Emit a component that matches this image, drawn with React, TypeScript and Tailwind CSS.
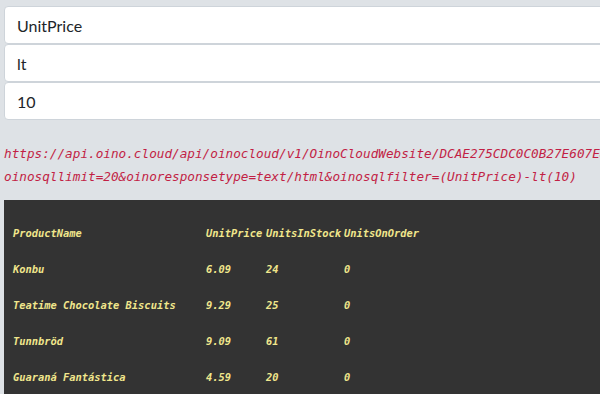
import React from 'react';

const fields = ['UnitPrice', 'lt', '10'];

const rows = [
  { name: 'Konbu', price: '6.09', stock: '24', order: '0' },
  { name: 'Teatime Chocolate Biscuits', price: '9.29', stock: '25', order: '0' },
  { name: 'Tunnbröd', price: '9.09', stock: '61', order: '0' },
  { name: 'Guaraná Fantástica', price: '4.59', stock: '20', order: '0' },
];

const mono = { fontFamily: '"DejaVu Sans Mono", "Liberation Mono", monospace' };

function Row({ cells }: { cells: string[] }) {
  return (
    <div className="flex h-[36px] items-center">
      <div className="w-[193px] shrink-0">{cells[0]}</div>
      <div className="w-[60px] shrink-0">{cells[1]}</div>
      <div className="w-[78px] shrink-0">{cells[2]}</div>
      <div className="shrink-0">{cells[3]}</div>
    </div>
  );
}

export default function App() {
  return (
    <div className="h-[394px] w-[600px] overflow-hidden bg-[#dee2e6]">
      <div className="w-[640px] pl-[4px] pt-[6px]">
        <div className="flex flex-col">
          {fields.map((f) => (
            <input
              key={f}
              readOnly
              value={f}
              className="h-[38px] w-full rounded-[4px] border border-[#ced4da] bg-white px-[12px] text-[16px] text-[#212529] outline-none"
              style={{ fontFamily: 'Lato, "Open Sans", sans-serif' }}
            />
          ))}
        </div>

        <div
          className="mt-[22px] text-[12.7px] italic leading-[23px] text-[#c21f45] whitespace-nowrap"
          style={mono}
        >
          <div>https://api.oino.cloud/api/oinocloud/v1/OinoCloudWebsite/DCAE275CDC0C0B27E607E8B1?</div>
          <div>oinosqllimit=20&amp;oinoresponsetype=text/html&amp;oinosqlfilter=(UnitPrice)-lt(10)</div>
        </div>

        <div
          className="mt-[12px] h-[220px] bg-[#333333] pl-[9px] pt-[16px] text-[10.4px] font-bold italic text-[#f0e68c] whitespace-nowrap"
          style={mono}
        >
          <Row cells={['ProductName', 'UnitPrice', 'UnitsInStock', 'UnitsOnOrder']} />
          {rows.map((r) => (
            <Row key={r.name} cells={[r.name, r.price, r.stock, r.order]} />
          ))}
        </div>
      </div>
    </div>
  );
}
